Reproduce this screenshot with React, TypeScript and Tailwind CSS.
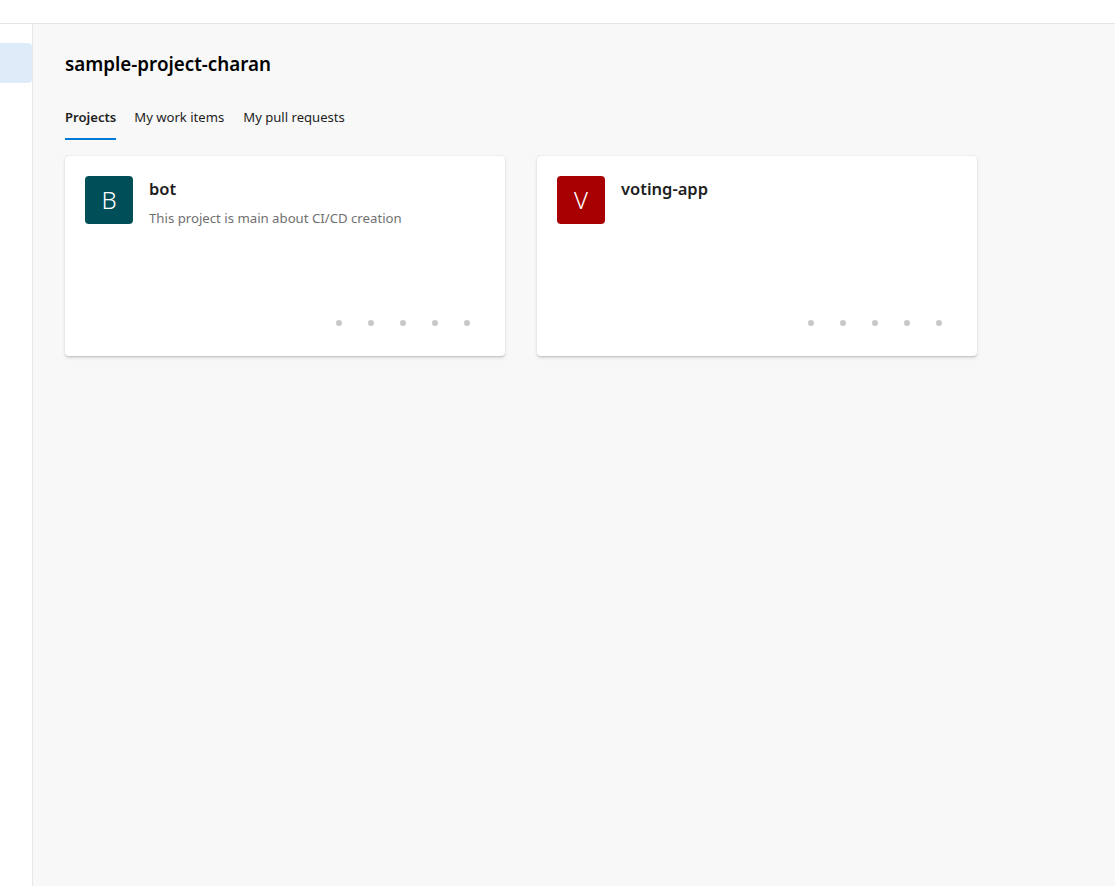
import React from "react";

interface Project {
  letter: string;
  name: string;
  description?: string;
  color: string;
}

const projects: Project[] = [
  {
    letter: "B",
    name: "bot",
    description: "This project is main about CI/CD creation",
    color: "bg-[#004e57]",
  },
  { letter: "V", name: "voting-app", color: "bg-[#a80000]" },
];

const ProjectCard = ({ project }: { project: Project }) => (
  <div className="w-[440px] h-[200px] bg-white rounded-[4px] shadow-[0_1.6px_3.6px_rgba(0,0,0,0.13),0_0.3px_0.9px_rgba(0,0,0,0.11)] p-5 flex flex-col">
    <div className="flex gap-4">
      <div
        className={`w-12 h-12 shrink-0 rounded-[4px] ${project.color} text-white text-[24px] font-light flex items-center justify-center`}
      >
        {project.letter}
      </div>
      <div className="flex flex-col">
        <h2 className="text-[16.5px] font-semibold text-[#1e1e1e] leading-6 mt-[1px]">
          {project.name}
        </h2>
        {project.description && (
          <p className="text-[13.2px] text-[#707070] mt-[8px]">{project.description}</p>
        )}
      </div>
    </div>
    <div className="mt-auto mb-[10px] flex justify-end gap-[26px] pr-[15px]">
      {[0, 1, 2, 3, 4].map((i) => (
        <span key={i} className="w-[6px] h-[6px] rounded-full bg-[#c8c8c8]" />
      ))}
    </div>
  </div>
);

const App = () => {
  return (
    <div className="w-[1115px] h-[886px] flex flex-col bg-white font-['Noto_Sans',sans-serif] overflow-hidden">
      <div className="h-[24px] shrink-0 bg-white border-b border-[#e6e6e6]" />
      <div className="flex flex-1 min-h-0">
        <aside className="w-[33px] shrink-0 bg-white border-r border-[#e6e6e6] pt-[19px]">
          <div className="h-10 w-[32px] bg-[#deecf9] rounded-r-[4px]" />
        </aside>
        <main className="flex-1 bg-[#f8f8f8] px-8 pt-[26px]">
          <h1 className="text-[18.8px] font-semibold text-black leading-7">
            sample-project-charan
          </h1>
          <nav className="flex gap-[18px] mt-[30px] text-[13.1px] text-[#1e1e1e]">
            <div className="flex flex-col">
              <span className="font-semibold">Projects</span>
              <span className="mt-[10px] h-[2px] bg-[#0078d4]" />
            </div>
            <span>My work items</span>
            <span className="ml-px">My pull requests</span>
          </nav>
          <div className="flex gap-8 mt-[16px]">
            {projects.map((p) => (
              <ProjectCard key={p.name} project={p} />
            ))}
          </div>
        </main>
      </div>
    </div>
  );
};

export default App;
